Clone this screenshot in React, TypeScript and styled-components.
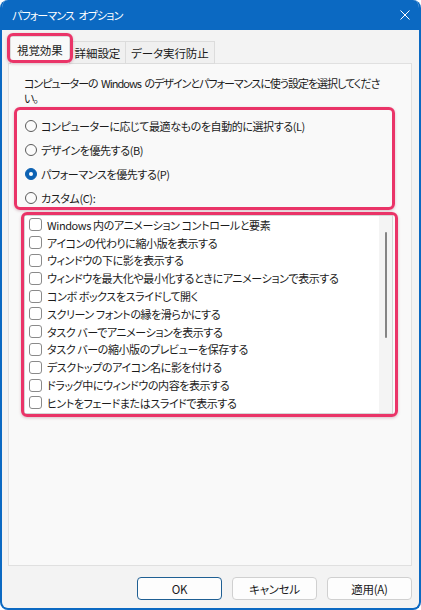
import React from "react";
import styled, { createGlobalStyle } from "styled-components";

const FONT = `"Noto Sans CJK JP", "Noto Sans", sans-serif`;
const ACCENT = "#0b69c2";
const PINK = "#ea3468";

const GlobalStyle = createGlobalStyle`
  html, body { margin: 0; padding: 0; background: #ffffff; }
  body {
    width: 421px; height: 610px; overflow: hidden;
    font-family: ${FONT};
    font-feature-settings: "palt" 1;
  }
  * { box-sizing: border-box; }
`;

const Window = styled.div`
  width: 421px;
  height: 610px;
  display: flex;
  flex-direction: column;
  background: #f3f3f3;
  border: 2px solid ${ACCENT};
  border-top: 0;
  border-radius: 8px;
  overflow: hidden;
  color: #1b1b1b;
  font-size: 11px;
  letter-spacing: -0.4px;
`;

const TitleBar = styled.div`
  height: 30px;
  flex: none;
  background: ${ACCENT};
  display: flex;
  align-items: center;
  justify-content: space-between;
  padding: 0 9px 0 10px;
  color: #ffffff;
`;

const Title = styled.span`
  font-size: 11px;
  letter-spacing: -0.9px;
  word-spacing: 3px;
  line-height: 30px;
`;

const CloseButton = styled.span`
  display: flex;
  width: 10px;
  height: 10px;
`;

const Body = styled.div`
  flex: 1;
  display: flex;
  flex-direction: column;
  padding: 6px 7px 0 6px;
  min-height: 0;
`;

const TabStrip = styled.div`
  height: 28px;
  flex: none;
  display: flex;
  align-items: flex-end;
  padding-left: 2px;
  margin-bottom: -1px;
  position: relative;
  z-index: 1;
`;

const TabWrap = styled.div`
  position: relative;
  display: flex;
  align-items: flex-end;
  height: 100%;
`;

const Tab = styled.div<{ $active?: boolean }>`
  display: flex;
  align-items: center;
  height: ${(p) => (p.$active ? "28px" : "23px")};
  padding: ${(p) => (p.$active ? "0 6px 2px" : "0 5px 0")};
  background: ${(p) => (p.$active ? "#f9f9f9" : "#f0f0f0")};
  border: 1px solid #dcdcdc;
  border-bottom: ${(p) => (p.$active ? "0" : "1px solid #dcdcdc")};
  border-left: ${(p) => (p.$active ? "1px solid #dcdcdc" : "0")};
  font-size: 11.5px;
  letter-spacing: -0.1px;
  white-space: nowrap;
`;

const Annot = styled.div<{ $inset: string }>`
  position: absolute;
  inset: ${(p) => p.$inset};
  border: 3px solid ${PINK};
  border-radius: 6px;
  box-shadow: 0 1px 3px rgba(120, 20, 50, 0.25);
  pointer-events: none;
  z-index: 2;
`;

const Panel = styled.div`
  flex: 1;
  background: #f9f9f9;
  border: 1px solid #e0e0e0;
  padding: 12px 18px 0 15px;
  display: flex;
  flex-direction: column;
`;

const Description = styled.p`
  margin: 0;
  line-height: 15px;
  letter-spacing: -1px;
  word-spacing: 2px;
  white-space: nowrap;
`;

const RadioGroup = styled.div`
  position: relative;
  margin-top: 8px;
  display: flex;
  flex-direction: column;
`;

const RadioRow = styled.label`
  display: flex;
  align-items: center;
  height: 24px;
  gap: 4px;
  padding-left: 1px;
`;

const RadioCircle = styled.span<{ $checked?: boolean }>`
  width: 12px;
  height: 12px;
  border-radius: 50%;
  flex: none;
  display: flex;
  align-items: center;
  justify-content: center;
  background: ${(p) => (p.$checked ? "#0d62b3" : "#fbfbfb")};
  border: 1px solid ${(p) => (p.$checked ? "#0d62b3" : "#5a5a5a")};

  &::after {
    content: "";
    display: ${(p) => (p.$checked ? "block" : "none")};
    width: 4px;
    height: 4px;
    border-radius: 50%;
    background: #ffffff;
  }
`;

const ListOuter = styled.div`
  position: relative;
  margin-top: 5px;
  height: 199px;
`;

const ListBox = styled.div`
  height: 100%;
  display: flex;
  background: #ffffff;
  border: 1px solid #d6d6d6;
  overflow: hidden;
`;

const Items = styled.div`
  flex: 1;
  display: flex;
  flex-direction: column;
`;

const CheckRow = styled.label`
  display: flex;
  align-items: center;
  height: 17.8px;
  gap: 5px;
  padding-left: 4px;
  white-space: nowrap;
`;

const CheckBox = styled.span`
  width: 13px;
  height: 13px;
  flex: none;
  border: 1px solid #8a8a8a;
  border-radius: 3px;
  background: #ffffff;
`;

const ScrollTrack = styled.div`
  width: 13px;
  flex: none;
  background: #f4f4f4;
  display: flex;
  justify-content: center;
  padding-top: 16px;
`;

const ScrollThumb = styled.div`
  width: 2px;
  height: 106px;
  border-radius: 1px;
  background: #858585;
`;

const Footer = styled.div`
  height: 42px;
  flex: none;
  display: flex;
  justify-content: flex-end;
  gap: 10px;
  padding-top: 11px;
`;

const Button = styled.button<{ $primary?: boolean }>`
  width: 85px;
  height: 23px;
  border-radius: 4px;
  border: 1px solid ${(p) => (p.$primary ? "#1f5f93" : "#d0d0d0")};
  background: #fdfdfd;
  font-family: ${FONT};
  font-feature-settings: "palt" 1;
  font-size: 11.5px;
  letter-spacing: -0.3px;
  color: #1b1b1b;
  padding: 0;
`;

const radios = [
  { label: "コンピューターに応じて最適なものを自動的に選択する(L)", checked: false },
  { label: "デザインを優先する(B)", checked: false },
  { label: "パフォーマンスを優先する(P)", checked: true },
  { label: "カスタム(C):", checked: false },
];

const options = [
  "Windows 内のアニメーション コントロールと要素",
  "アイコンの代わりに縮小版を表示する",
  "ウィンドウの下に影を表示する",
  "ウィンドウを最大化や最小化するときにアニメーションで表示する",
  "コンボ ボックスをスライドして開く",
  "スクリーン フォントの縁を滑らかにする",
  "タスク バーでアニメーションを表示する",
  "タスク バーの縮小版のプレビューを保存する",
  "デスクトップのアイコン名に影を付ける",
  "ドラッグ中にウィンドウの内容を表示する",
  "ヒントをフェードまたはスライドで表示する",
];

export default function App() {
  return (
    <>
      <GlobalStyle />
      <Window>
        <TitleBar>
          <Title>パフォーマンス オプション</Title>
          <CloseButton>
            <svg width="10" height="10" viewBox="0 0 10 10">
              <path d="M0.5 0.5 L9.5 9.5 M9.5 0.5 L0.5 9.5" stroke="#ffffff" strokeWidth="1" fill="none" />
            </svg>
          </CloseButton>
        </TitleBar>
        <Body>
          <TabStrip>
            <TabWrap>
              <Tab $active>視覚効果</Tab>
              <Annot $inset="-3px -3px 1px -3px" />
            </TabWrap>
            <Tab>詳細設定</Tab>
            <Tab>データ実行防止</Tab>
          </TabStrip>
          <Panel>
            <Description>
              {"コンピューターの Windows のデザインとパフォーマンスに使う設定を選択してくださ"}
              <br />
              {"い。"}
            </Description>
            <RadioGroup>
              {radios.map((r) => (
                <RadioRow key={r.label}>
                  <RadioCircle $checked={r.checked} />
                  <span>{r.label}</span>
                </RadioRow>
              ))}
              <Annot $inset="-7px -2px 0 -10px" />
            </RadioGroup>
            <ListOuter>
              <ListBox>
                <Items>
                  {options.map((o) => (
                    <CheckRow key={o}>
                      <CheckBox />
                      <span>{o}</span>
                    </CheckRow>
                  ))}
                </Items>
                <ScrollTrack>
                  <ScrollThumb />
                </ScrollTrack>
              </ListBox>
              <Annot $inset="-3px -5px -3px -3px" />
            </ListOuter>
          </Panel>
          <Footer>
            <Button $primary>OK</Button>
            <Button>キャンセル</Button>
            <Button>適用(A)</Button>
          </Footer>
        </Body>
      </Window>
    </>
  );
}
